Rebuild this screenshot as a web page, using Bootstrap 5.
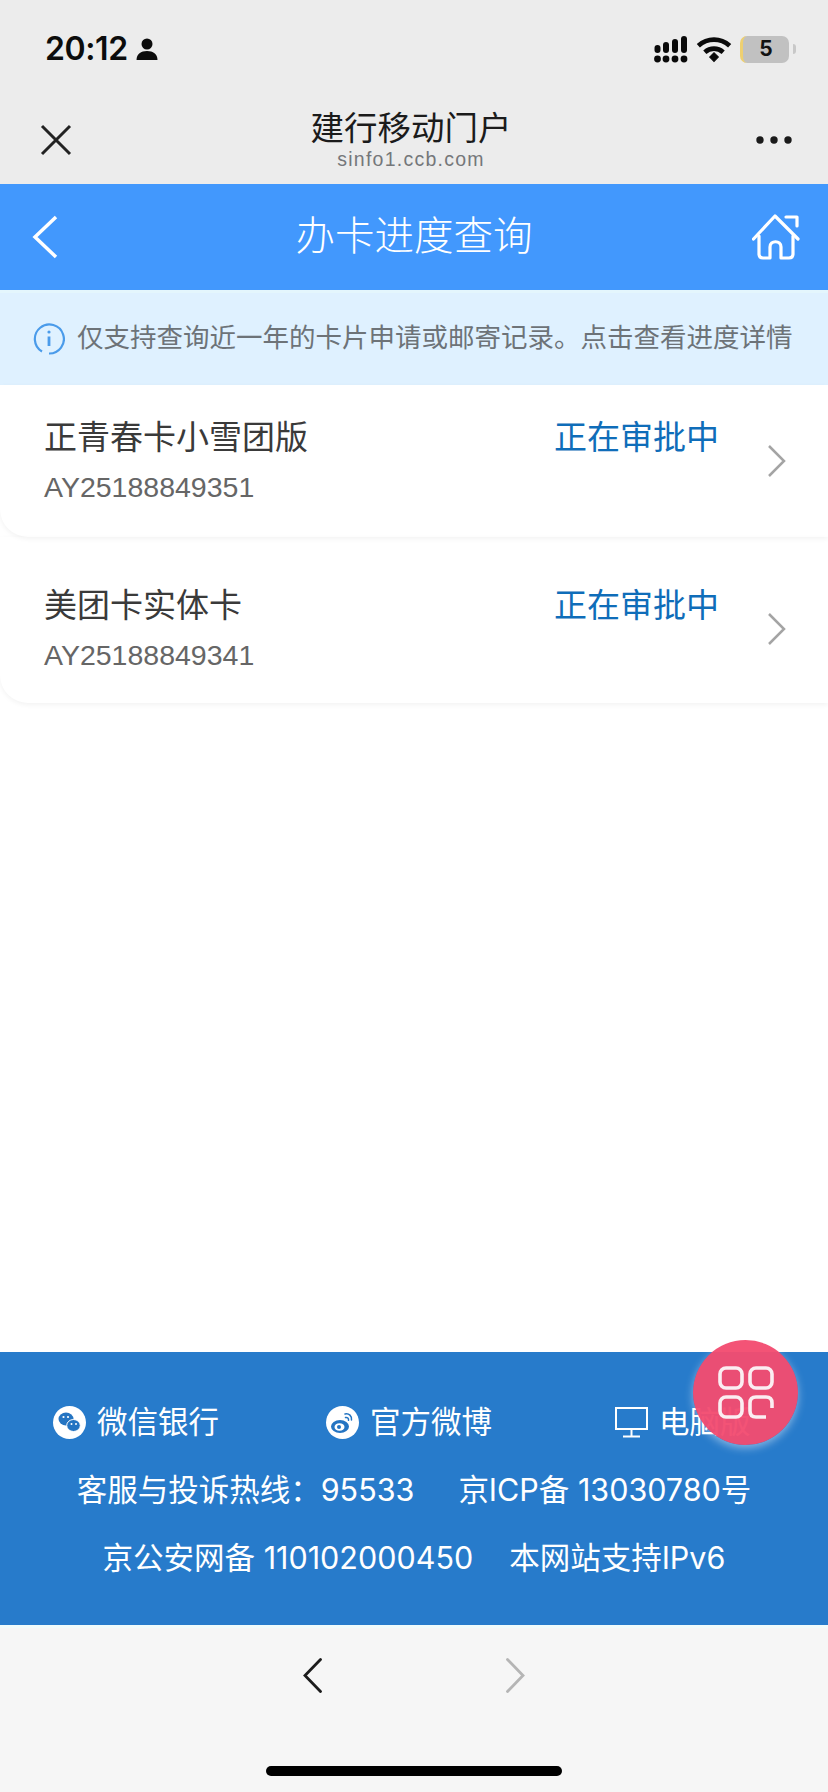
<!DOCTYPE html>
<html lang="zh-CN">

<head>
    <meta charset="UTF-8">
    <title>办卡进度查询</title>
    <link href="https://cdn.jsdelivr.net/npm/bootstrap@5.3.3/dist/css/bootstrap.min.css" rel="stylesheet">
    <style>
        body {
            font-family: "Liberation Sans", "Noto Sans CJK SC", sans-serif;
            background: #fff;
        }

        .phone-page {
            width: 828px;
            height: 1792px;
            overflow: hidden;
        }

        /* barra de estado + barra del navegador */
        .top-area {
            background: #ececec;
            height: 184px;
        }

        .status-row {
            height: 92px;
            padding: 6px 32px 0 45px;
        }

        .clock {
            font-family: Inter, "Liberation Sans", sans-serif;
            font-size: 32px;
            font-weight: 600;
            color: #0c0c0c;
            letter-spacing: -0.4px;
        }

        .battery-box {
            width: 49px;
            height: 27px;
            border-radius: 7px;
            background: #c1c1c1;
            border-left: 3px solid #eed071;
            font-family: Inter, "Liberation Sans", sans-serif;
            font-size: 21px;
            font-weight: 700;
            color: #111;
        }

        .battery-nub {
            width: 3px;
            height: 10px;
            border-radius: 0 3px 3px 0;
            background: #c8c8c8;
        }

        .browser-row {
            height: 92px;
            padding: 4px 36px 0 40px;
        }

        .browser-left {
            width: 60px;
        }

        .browser-right {
            width: 70px;
        }

        .browser-title {
            font-size: 33.5px;
            line-height: 40px;
            color: #1b1b1b;
            margin-top: -3px;
        }

        .browser-url {
            font-size: 19.5px;
            line-height: 20px;
            color: #75777a;
            letter-spacing: 1.25px;
        }

        .page-header {
            background: #4298fd;
            height: 106px;
            padding: 0 28px 0 32px;
            color: #fff;
        }

        .header-side {
            width: 44px;
        }

        .header-title {
            font-size: 39.5px;
            font-weight: 300;
        }

        .tip-bar {
            background: #dff1ff;
            height: 95px;
            padding-left: 33px;
            gap: 12px;
            border-top: 3px solid #e4f6fd;
            color: #6d7378;
            font-size: 26.5px;
            white-space: nowrap;
        }

        /* tarjetas de solicitud */
        .apply-item {
            padding: 33px 40px 0 44px;
            border-radius: 0 0 0 28px;
            box-shadow: 0 2px 5px rgba(0, 0, 0, 0.05);
        }

        .apply-item-first {
            height: 152px;
        }

        .apply-item-second {
            height: 166px;
            padding-top: 49px;
        }

        .apply-info {
            width: 510px;
        }

        .apply-name {
            font-size: 33px;
            line-height: 40px;
            color: #3a3a3a;
        }

        .apply-code {
            font-size: 28.5px;
            line-height: 36px;
            color: #666;
            margin-top: 11px;
        }

        .apply-status {
            font-size: 33px;
            line-height: 40px;
            color: #0f6db9;
            width: 213px;
        }

        .chevron-gray {
            margin-top: 26px;
        }

        /* pie azul */
        .foot-blue {
            background: #277bcb;
            height: 273px;
            padding-top: 36px;
            color: #fff;
            font-family: Inter, "Noto Sans CJK SC", sans-serif;
            font-size: 30.5px;
        }

        .foot-links {
            display: grid;
            grid-template-columns: 273px 289px 1fr;
            padding-left: 53px;
            height: 68px;
            white-space: nowrap;
        }

        .foot-line {
            height: 68px;
            white-space: nowrap;
        }

        .line-gap-a {
            gap: 44px;
        }

        .line-gap-b {
            gap: 36px;
        }

        .round-icon {
            width: 33px;
            height: 33px;
            margin-right: 11px;
        }

        .float-btn {
            position: absolute;
            left: 693px;
            top: 1340px;
            width: 105px;
            height: 105px;
            border-radius: 50%;
            background: rgba(243, 76, 112, 0.96);
            box-shadow: 0 3px 8px rgba(255, 255, 255, 0.45);
        }

        .bottom-nav {
            background: #f6f6f6;
            height: 167px;
            border-top: 3px solid #f0fbfb;
        }

        .nav-arrows {
            gap: 184px;
            padding-top: 30px;
        }

        .home-bar {
            position: absolute;
            left: 266px;
            top: 1766px;
            width: 296px;
            height: 10px;
            border-radius: 5px;
            background: #000;
        }
    </style>
</head>

<body class="m-0">
    <div class="phone-page position-relative d-flex flex-column">

        <!-- Barra superior -->
        <div class="top-area">
            <div class="status-row d-flex align-items-center justify-content-between">
                <div class="d-flex align-items-center gap-2">
                    <span class="clock">20:12</span>
                    <svg width="22" height="24" viewBox="0 0 22 24">
                        <circle cx="11" cy="7" r="5.5" fill="#0c0c0c" />
                        <path d="M0.5 23c0-6 4.5-9 10.500-9s10.500 3 10.500 9z" fill="#0c0c0c" />
                    </svg>
                </div>
                <div class="d-flex align-items-center">
                    <svg width="34" height="27" viewBox="0 0 34 27" fill="#0a0a0a">
                        <circle cx="3.5" cy="23" r="3.4" />
                        <circle cx="12" cy="23" r="3.4" />
                        <circle cx="21" cy="23" r="3.4" />
                        <circle cx="30" cy="23" r="3.4" />
                        <rect x="0.5" y="9" width="6" height="8" rx="3" />
                        <rect x="9" y="6" width="6" height="11" rx="3" />
                        <rect x="18" y="3" width="6" height="14" rx="3" />
                        <rect x="27" y="0" width="6" height="17" rx="3" />
                    </svg>
                    <svg class="ms-2 me-2" width="36" height="27" viewBox="0 0 33 25" fill="none" stroke="#0a0a0a"
                        stroke-width="4.4">
                        <path d="M2 9c8.500-7.500 20.500-7.500 29 0" />
                        <path d="M8 15c5-4.400 12-4.400 17 0" />
                        <path d="M12.500 19.500l4-4 4 4-4 4z" fill="#0a0a0a" stroke-width="1" />
                    </svg>
                    <span class="battery-box d-flex align-items-center justify-content-center">5</span>
                    <span class="battery-nub ms-1"></span>
                </div>
            </div>
            <div class="browser-row d-flex align-items-center justify-content-between">
                <div class="browser-left">
                    <svg width="32" height="32" viewBox="0 0 32 32" stroke="#222" stroke-width="3" fill="none">
                        <path d="M2 2l28 28M30 2L2 30" />
                    </svg>
                </div>
                <div class="text-center">
                    <div class="browser-title">建行移动门户</div>
                    <div class="browser-url">sinfo1.ccb.com</div>
                </div>
                <div class="browser-right d-flex justify-content-end">
                    <svg width="36" height="8" viewBox="0 0 36 8" fill="#1a1a1a">
                        <circle cx="4" cy="4" r="3.700" />
                        <circle cx="18" cy="4" r="3.700" />
                        <circle cx="32" cy="4" r="3.700" />
                    </svg>
                </div>
            </div>
        </div>

        <!-- Cabecera azul -->
        <div class="page-header d-flex align-items-center justify-content-between">
            <div class="header-side d-flex">
                <svg width="26" height="44" viewBox="0 0 26 44" fill="none" stroke="#fff" stroke-width="3.500">
                    <path d="M24 2L3 22l21 20" />
                </svg>
            </div>
            <div class="header-title">办卡进度查询</div>
            <svg width="48" height="46" viewBox="0 0 48 46" fill="none" stroke="#fff" stroke-width="3.200"
                stroke-linecap="round" stroke-linejoin="round">
                <path d="M1.500 25L23 2l23 23" />
                <path d="M34 3h11v9" />
                <path d="M7 22v18c0 3 2 4 4 4h7V33c0-7 11-7 11 0v11h8c2 0 4-1 4-4V22" />
            </svg>
        </div>

        <!-- Aviso -->
        <div class="tip-bar d-flex align-items-center">
            <svg width="32" height="32" viewBox="0 0 32 32" fill="none" stroke="#4a9bea" stroke-width="2.200">
                <path d="M9 28.500A14.500 14.500 0 1 1 16 30.500" />
                <path d="M16 13.500v9.500" stroke-width="2.800" />
                <circle cx="16" cy="9" r="1.600" fill="#4a9bea" stroke="none" />
            </svg>
            <span>仅支持查询近一年的卡片申请或邮寄记录。点击查看进度详情</span>
        </div>

        <!-- Lista -->
        <div class="flex-grow-1">
            <div class="apply-item apply-item-first d-flex">
                <div class="apply-info">
                    <div class="apply-name">正青春卡小雪团版</div>
                    <div class="apply-code">AY25188849351</div>
                </div>
                <div class="apply-status">正在审批中</div>
                <svg class="chevron-gray" width="20" height="34" viewBox="0 0 20 34" fill="none" stroke="#a4a4a4"
                    stroke-width="2.500">
                    <path d="M2 2l15 15L2 32" />
                </svg>
            </div>
            <div class="apply-item apply-item-second d-flex">
                <div class="apply-info">
                    <div class="apply-name">美团卡实体卡</div>
                    <div class="apply-code">AY25188849341</div>
                </div>
                <div class="apply-status">正在审批中</div>
                <svg class="chevron-gray" width="20" height="34" viewBox="0 0 20 34" fill="none" stroke="#a4a4a4"
                    stroke-width="2.500">
                    <path d="M2 2l15 15L2 32" />
                </svg>
            </div>
        </div>

        <!-- Pie -->
        <div class="foot-blue">
            <div class="foot-links align-items-center">
                <div class="d-flex align-items-center">
                    <svg class="round-icon" viewBox="0 0 33 33">
                        <circle cx="16.500" cy="16.500" r="16.500" fill="#fff" />
                        <ellipse cx="13" cy="13" rx="7.500" ry="6.500" fill="#2474c2" />
                        <ellipse cx="20.500" cy="19.500" rx="6.800" ry="6" fill="#2474c2" stroke="#fff" />
                        <circle cx="10.500" cy="11" r="1.100" fill="#fff" />
                        <circle cx="15" cy="11" r="1.100" fill="#fff" />
                        <circle cx="18.500" cy="18" r="1" fill="#fff" />
                        <circle cx="23" cy="18" r="1" fill="#fff" />
                    </svg>
                    <span>微信银行</span>
                </div>
                <div class="d-flex align-items-center">
                    <svg class="round-icon" viewBox="0 0 33 33">
                        <circle cx="16.500" cy="16.500" r="16.500" fill="#fff" />
                        <ellipse cx="14" cy="20.500" rx="9" ry="6.500" fill="#2474c2" />
                        <ellipse cx="13.500" cy="21" rx="5" ry="3.800" fill="#fff" />
                        <circle cx="13" cy="21" r="2" fill="#2474c2" />
                        <path d="M19 8c4-1 7 2 6.500 6M19.500 11.500c2-.4 3.300 1 3 2.800" fill="none" stroke="#2474c2"
                            stroke-width="1.500" stroke-linecap="round" />
                    </svg>
                    <span>官方微博</span>
                </div>
                <div class="d-flex align-items-center">
                    <svg class="round-icon" viewBox="0 0 33 33" fill="none" stroke="#fff" stroke-width="2">
                        <rect x="1" y="2" width="31" height="21" />
                        <path d="M16.500 23v7M8 30.500h17" />
                    </svg>
                    <span>电脑版</span>
                </div>
            </div>
            <div class="foot-line d-flex align-items-center justify-content-center line-gap-a">
                <span>客服与投诉热线：95533</span>
                <span>京ICP备 13030780号</span>
            </div>
            <div class="foot-line d-flex align-items-center justify-content-center line-gap-b">
                <span>京公安网备 110102000450</span>
                <span>本网站支持IPv6</span>
            </div>
        </div>

        <!-- Botón flotante -->
        <div class="float-btn d-flex align-items-center justify-content-center">
            <svg width="56" height="54" viewBox="0 0 56 54" fill="none" stroke="#fbeef2" stroke-width="3.600">
                <rect x="2" y="2" width="22" height="20" rx="6" />
                <rect x="32" y="2" width="22" height="20" rx="6" />
                <rect x="2" y="31" width="22" height="20" rx="6" />
                <path d="M54 42v-5c0-4-2-6-6-6H38c-4 0-6 2-6 6v8c0 4 2 6 6 6h10" />
            </svg>
        </div>

        <!-- Navegación inferior -->
        <div class="bottom-nav">
            <div class="nav-arrows d-flex justify-content-center">
                <svg width="19" height="35" viewBox="0 0 19 35" fill="none" stroke="#1c1c1c" stroke-width="2.800"
                    stroke-linecap="round">
                    <path d="M17.500 1.500L2 17.500l15.500 16" />
                </svg>
                <svg width="19" height="35" viewBox="0 0 19 35" fill="none" stroke="#b5b5b5" stroke-width="2.800"
                    stroke-linecap="round">
                    <path d="M1.500 1.500L17 17.500l-15.500 16" />
                </svg>
            </div>
        </div>
        <div class="home-bar"></div>
    </div>

    <script src="https://cdn.jsdelivr.net/npm/bootstrap@5.3.3/dist/js/bootstrap.bundle.min.js"></script>
</body>

</html>
